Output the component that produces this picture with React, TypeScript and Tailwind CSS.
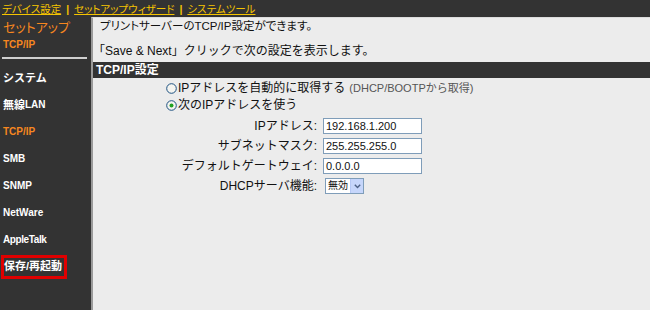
import React from "react";

const FONT = "[font-family:'Liberation_Sans','Noto_Sans_CJK_JP',sans-serif]";

function Radio({ checked }: { checked?: boolean }) {
  return (
    <svg width="11" height="11" viewBox="0 0 11 11" className="shrink-0">
      <circle cx="5.5" cy="5.5" r="4.8" fill="#f4f4f0" stroke="#1c5180" strokeWidth="1" />
      {checked && <circle cx="5.5" cy="5.5" r="2" fill="#21a121" />}
    </svg>
  );
}

function Field({ label, value }: { label: string; value: string }) {
  return (
    <div className="flex items-center h-[16px]">
      <div className="w-[224px] text-right text-[12px] leading-[16px] text-[#111]">{label}</div>
      <div className="ml-[6px] w-[99px] h-[16px] border border-[#7f9db9] bg-white text-[11px] leading-[14px] pl-[2px] text-[#111]">
        {value}
      </div>
    </div>
  );
}

export default function App() {
  const menu: { label: React.ReactNode; active?: boolean }[] = [
    { label: <span className="text-[11px]">システム</span> },
    { label: <><span className="text-[11px]">無線</span><span className="text-[10px]">LAN</span></> },
    { label: <span className="text-[10px]">TCP/IP</span>, active: true },
    { label: <span className="text-[10px]">SMB</span> },
    { label: <span className="text-[10px]">SNMP</span> },
    { label: <span className="text-[10px]">NetWare</span> },
    { label: <span className="text-[10px] tracking-[-0.4px]">AppleTalk</span> },
  ];
  return (
    <div className={`w-[650px] h-[310px] bg-[#333333] flex flex-col overflow-hidden ${FONT}`}>
      {/* top links */}
      <div className="h-[17px] flex items-center pl-[2px] text-[10.5px] text-[#f5c400] leading-[12px] [font-feature-settings:'palt']">
        <span className="underline">デバイス設定</span>
        <span className="mx-[5px] font-bold">|</span>
        <span className="underline">セットアップウィザード</span>
        <span className="mx-[5px] font-bold">|</span>
        <span className="underline">システムツール</span>
      </div>
      <div className="flex flex-1 min-h-0">
        {/* sidebar */}
        <div className="w-[91px] shrink-0 flex flex-col">
          <div className="pl-[3px] pt-[3px] text-[13px] leading-[16px] text-[#f7871f] [font-feature-settings:'palt']">
            セットアップ
          </div>
          <div className="pl-[3px] mt-[3px] text-[10px] leading-[12px] font-bold text-[#f7871f]">TCP/IP</div>
          <div className="ml-[2px] mt-[6px] w-[85px] h-[2px] bg-[#cfcfcf]" />
          <div className="mt-[5px] flex flex-col">
            {menu.map((m, i) => (
              <div
                key={i}
                className={`h-[27px] flex items-center pl-[3px] font-bold leading-[14px] ${
                  m.active ? "text-[#f7871f]" : "text-white"
                }`}
              >
                {m.label}
              </div>
            ))}
            <div className="h-[27px] flex items-center">
              <div className="ml-[1px] w-[66px] h-[24px] border-[3px] border-[#e00000] flex items-center text-[11px] font-bold text-white">
                保存/再起動
              </div>
            </div>
          </div>
        </div>
        {/* content */}
        <div className="flex-1 bg-[#ececec] border-l-2 border-t border-l-[#9a9a9a] border-t-[#dcdcdc] flex flex-col">
          <div className="h-[16px] leading-[16px] text-[11.5px] text-[#111] pl-[7px] [font-feature-settings:'palt']">
            プリントサーバーのTCP/IP設定ができます。
          </div>
          <div className="mt-[9px] h-[16px] leading-[16px] text-[12px] text-[#111]">
            「Save &amp; Next」クリックで次の設定を表示します。
          </div>
          <div className="mt-[3px] h-[16px] bg-[#333333] pl-[3px] text-[12px] leading-[16px] font-bold text-white">
            TCP/IP設定
          </div>
          <div className="mt-[2px] h-[16px] flex items-center pl-[73px] text-[12px] leading-[16px] text-[#111]">
            <Radio />
            <span className="ml-[1px]">IPアドレスを自動的に取得する</span>
            <span className="ml-[4px] text-[11px] text-[#555]">(DHCP/BOOTPから取得)</span>
          </div>
          <div className="mt-[1px] h-[16px] flex items-center pl-[73px] text-[12px] leading-[16px] text-[#111]">
            <Radio checked />
            <span className="ml-[1px]">次のIPアドレスを使う</span>
          </div>
          <div className="mt-[5px] flex flex-col gap-[4px]">
            <Field label="IPアドレス:" value="192.168.1.200" />
            <Field label="サブネットマスク:" value="255.255.255.0" />
            <Field label="デフォルトゲートウェイ:" value="0.0.0.0" />
            <div className="flex items-center h-[16px]">
              <div className="w-[224px] text-right text-[12px] leading-[16px] text-[#111]">DHCPサーバ機能:</div>
              <div className="ml-[8px] w-[39px] h-[16px] border border-[#7f9db9] bg-white flex items-center justify-between text-[10px] leading-[14px] text-[#111] whitespace-nowrap">
                <span className="pl-[2px]">無効</span>
                <span className="w-[13px] h-[14px] bg-[#c6d6fb] border-l border-[#b5c8f5] flex items-center justify-center shrink-0">
                  <svg width="7" height="5" viewBox="0 0 7 5">
                    <path d="M0.8 0.8 L3.5 3.5 L6.2 0.8" fill="none" stroke="#4d6185" strokeWidth="1.4" />
                  </svg>
                </span>
              </div>
            </div>
          </div>
        </div>
      </div>
    </div>
  );
}
